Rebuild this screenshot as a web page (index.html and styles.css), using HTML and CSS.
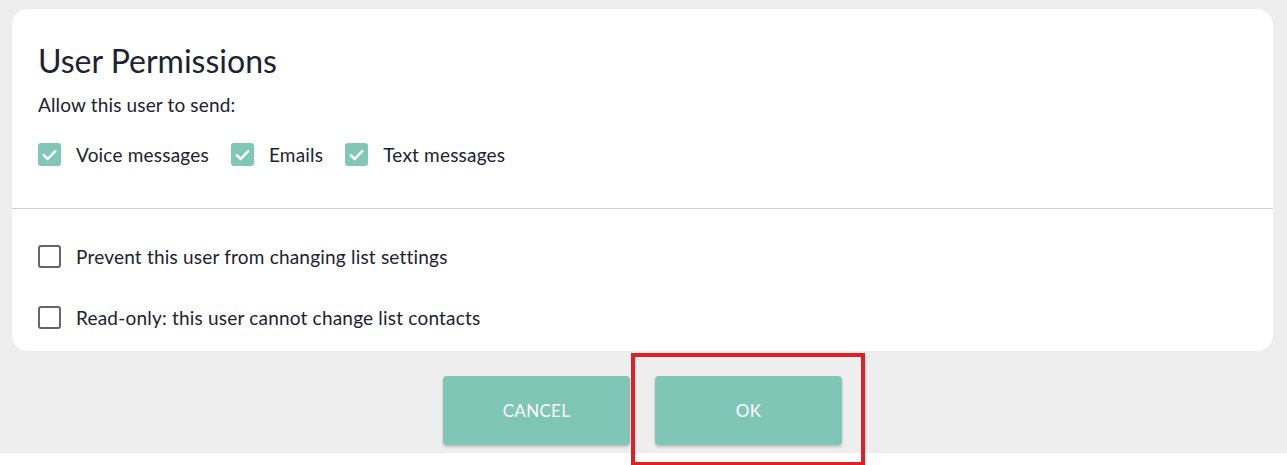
FILE: index.html
```html
<!DOCTYPE html>
<html lang="en">
<head>
  <meta charset="UTF-8" />
  <title>User Permissions</title>
  <link rel="stylesheet" href="styles.css">
</head>
<body>
  <div class="page">
    <div class="card">
      <div class="card-top">
        <h1>User Permissions</h1>
        <p class="hint">Allow this user to send:</p>
        <div class="send-row">
          <label class="check"><span class="box checked"><svg viewBox="0 0 22 22"><path d="M5.5 11.5l3.8 3.8 7.2-7.6" /></svg></span>Voice messages</label>
          <label class="check"><span class="box checked"><svg viewBox="0 0 22 22"><path d="M5.5 11.5l3.8 3.8 7.2-7.6" /></svg></span>Emails</label>
          <label class="check"><span class="box checked"><svg viewBox="0 0 22 22"><path d="M5.5 11.5l3.8 3.8 7.2-7.6" /></svg></span>Text messages</label>
        </div>
      </div>
      <div class="card-bottom">
        <label class="check"><span class="box"></span>Prevent this user from changing list settings</label>
        <label class="check"><span class="box"></span>Read-only: this user cannot change list contacts</label>
      </div>
    </div>

    <div class="actions">
      <button class="btn">Cancel</button>
      <button class="btn">OK<span class="highlight"></span></button>
    </div>
  </div>
  <div class="footer"></div>
</body>
</html>
```

FILE: styles.css
```css
body {
  margin: 0;
  font-family: Lato, 'Open Sans', sans-serif;
  color: #1c2230;
  background: #fff;
  min-height: 465px;
}

.page {
  background: #eeeeee;
  height: 453px;
  padding: 9px 14px 0 12px;
  box-sizing: border-box;
}

.footer {
  height: 12px;
}

.card {
  background: #fff;
  border-radius: 16px;
  height: 342px;
}

.card-top {
  padding: 34px 26px 0;
  height: 200px;
  box-sizing: border-box;
  border-bottom: 1px solid #cfcfcf;
}

h1 {
  margin: 0;
  font-size: 32px;
  font-weight: 400;
  line-height: 36px;
}

.hint {
  margin: 15px 0 0;
  font-size: 19px;
  line-height: 22px;
  letter-spacing: 0.15px;
}

.send-row {
  display: flex;
  gap: 22px;
  margin-top: 27px;
}

.check {
  display: flex;
  align-items: center;
  gap: 15px;
  font-size: 19px;
  line-height: 23px;
  letter-spacing: 0.2px;
}

.box {
  width: 23px;
  height: 23px;
  box-sizing: border-box;
  border: 2px solid #666;
  border-radius: 3px;
  flex: none;
}

.box.checked {
  border: none;
  background: #80c7b7;
}

.box svg {
  display: block;
  width: 23px;
  height: 23px;
  fill: none;
  stroke: #fff;
  stroke-width: 2.4;
  stroke-linecap: round;
  stroke-linejoin: round;
}

.card-bottom {
  padding: 36px 26px 0;
  display: flex;
  flex-direction: column;
  gap: 38px;
}

.actions {
  display: flex;
  justify-content: center;
  gap: 25px;
  margin-top: 25px;
}

.btn {
  position: relative;
  width: 187px;
  height: 69px;
  border: none;
  border-radius: 4px;
  background: #80c6b6;
  color: #fff;
  font-family: inherit;
  font-size: 17px;
  letter-spacing: 0.3px;
  text-transform: uppercase;
  box-shadow: 0 2px 3px rgba(0, 0, 0, 0.2);
}

.highlight {
  position: absolute;
  left: -24px;
  top: -23px;
  width: 234px;
  height: 113px;
  box-sizing: border-box;
  border: 4px solid #e21d23;
}
```
